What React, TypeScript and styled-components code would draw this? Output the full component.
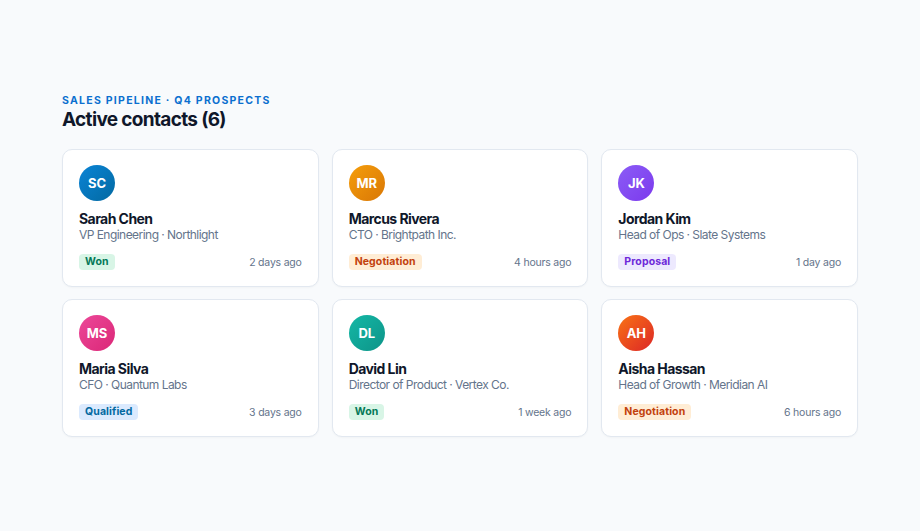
import React from "react";
import styled, { createGlobalStyle } from "styled-components";

const Global = createGlobalStyle`
  html, body { margin: 0; padding: 0; background: #f8fafc; }
  body { font-family: Inter, "Noto Sans", sans-serif; -webkit-font-smoothing: antialiased; }
  * { box-sizing: border-box; }
`;

const Page = styled.div`
  width: 920px;
  height: 531px;
  background: #f8fafc;
  padding: 94px 62px 0 62px;
`;

const Eyebrow = styled.div`
  font-size: 10.5px;
  font-weight: 700;
  letter-spacing: 0.12em;
  color: #0b6fcf;
  text-transform: uppercase;
  line-height: 14px;
`;

const Title = styled.h1`
  margin: 0;
  font-size: 19px;
  font-weight: 700;
  letter-spacing: -0.035em;
  color: #0f172a;
  line-height: 24px;
`;

const Grid = styled.div`
  margin-top: 17px;
  display: grid;
  grid-template-columns: repeat(3, 1fr);
  gap: 12px 13px;
`;

const Card = styled.div`
  background: #ffffff;
  border: 1px solid #e2e8f0;
  border-radius: 10px;
  padding: 15px 16px 16px 16px;
  display: flex;
  flex-direction: column;
  box-shadow: 0 1px 2px rgba(15, 23, 42, 0.03);
`;

const Avatar = styled.div<{ $from: string; $to: string }>`
  width: 36px;
  height: 36px;
  border-radius: 50%;
  background: linear-gradient(135deg, ${(p) => p.$from}, ${(p) => p.$to});
  color: #fff;
  font-size: 13px;
  font-weight: 700;
  display: flex;
  align-items: center;
  justify-content: center;
  letter-spacing: -0.01em;
`;

const Name = styled.div`
  margin-top: 9px;
  font-size: 14px;
  font-weight: 700;
  color: #0f172a;
  line-height: 18px;
  letter-spacing: -0.04em;
`;

const Role = styled.div`
  font-size: 12px;
  color: #64748b;
  line-height: 14px;
  letter-spacing: -0.045em;
`;

const Footer = styled.div`
  margin-top: 12px;
  display: flex;
  align-items: center;
  justify-content: space-between;
`;

const Badge = styled.span<{ $bg: string; $fg: string }>`
  background: ${(p) => p.$bg};
  color: ${(p) => p.$fg};
  font-size: 10.5px;
  font-weight: 700;
  line-height: 16px;
  padding: 0 6px;
  border-radius: 4px;
  letter-spacing: 0.01em;
`;

const Time = styled.span`
  font-size: 10.5px;
  color: #64748b;
  letter-spacing: -0.02em;
`;

const stages: Record<string, { bg: string; fg: string }> = {
  Won: { bg: "#d8f5e6", fg: "#047857" },
  Negotiation: { bg: "#ffedd5", fg: "#c2410c" },
  Proposal: { bg: "#ede9fe", fg: "#6d28d9" },
  Qualified: { bg: "#dbeafe", fg: "#0369a1" },
};

const contacts = [
  { i: "SC", name: "Sarah Chen", role: "VP Engineering · Northlight", stage: "Won", time: "2 days ago", from: "#0a84d6", to: "#0369a1" },
  { i: "MR", name: "Marcus Rivera", role: "CTO · Brightpath Inc.", stage: "Negotiation", time: "4 hours ago", from: "#f59e0b", to: "#d97706" },
  { i: "JK", name: "Jordan Kim", role: "Head of Ops · Slate Systems", stage: "Proposal", time: "1 day ago", from: "#8b5cf6", to: "#7c3aed" },
  { i: "MS", name: "Maria Silva", role: "CFO · Quantum Labs", stage: "Qualified", time: "3 days ago", from: "#ec4899", to: "#db2777" },
  { i: "DL", name: "David Lin", role: "Director of Product · Vertex Co.", stage: "Won", time: "1 week ago", from: "#14b8a6", to: "#0d9488" },
  { i: "AH", name: "Aisha Hassan", role: "Head of Growth · Meridian AI", stage: "Negotiation", time: "6 hours ago", from: "#f97316", to: "#dc2626" },
];

export default function App() {
  return (
    <>
      <Global />
      <Page>
        <Eyebrow>Sales pipeline · Q4 prospects</Eyebrow>
        <Title>Active contacts (6)</Title>
        <Grid>
          {contacts.map((c) => (
            <Card key={c.i}>
              <Avatar $from={c.from} $to={c.to}>{c.i}</Avatar>
              <Name>{c.name}</Name>
              <Role>{c.role}</Role>
              <Footer>
                <Badge $bg={stages[c.stage].bg} $fg={stages[c.stage].fg}>{c.stage}</Badge>
                <Time>{c.time}</Time>
              </Footer>
            </Card>
          ))}
        </Grid>
      </Page>
    </>
  );
}
